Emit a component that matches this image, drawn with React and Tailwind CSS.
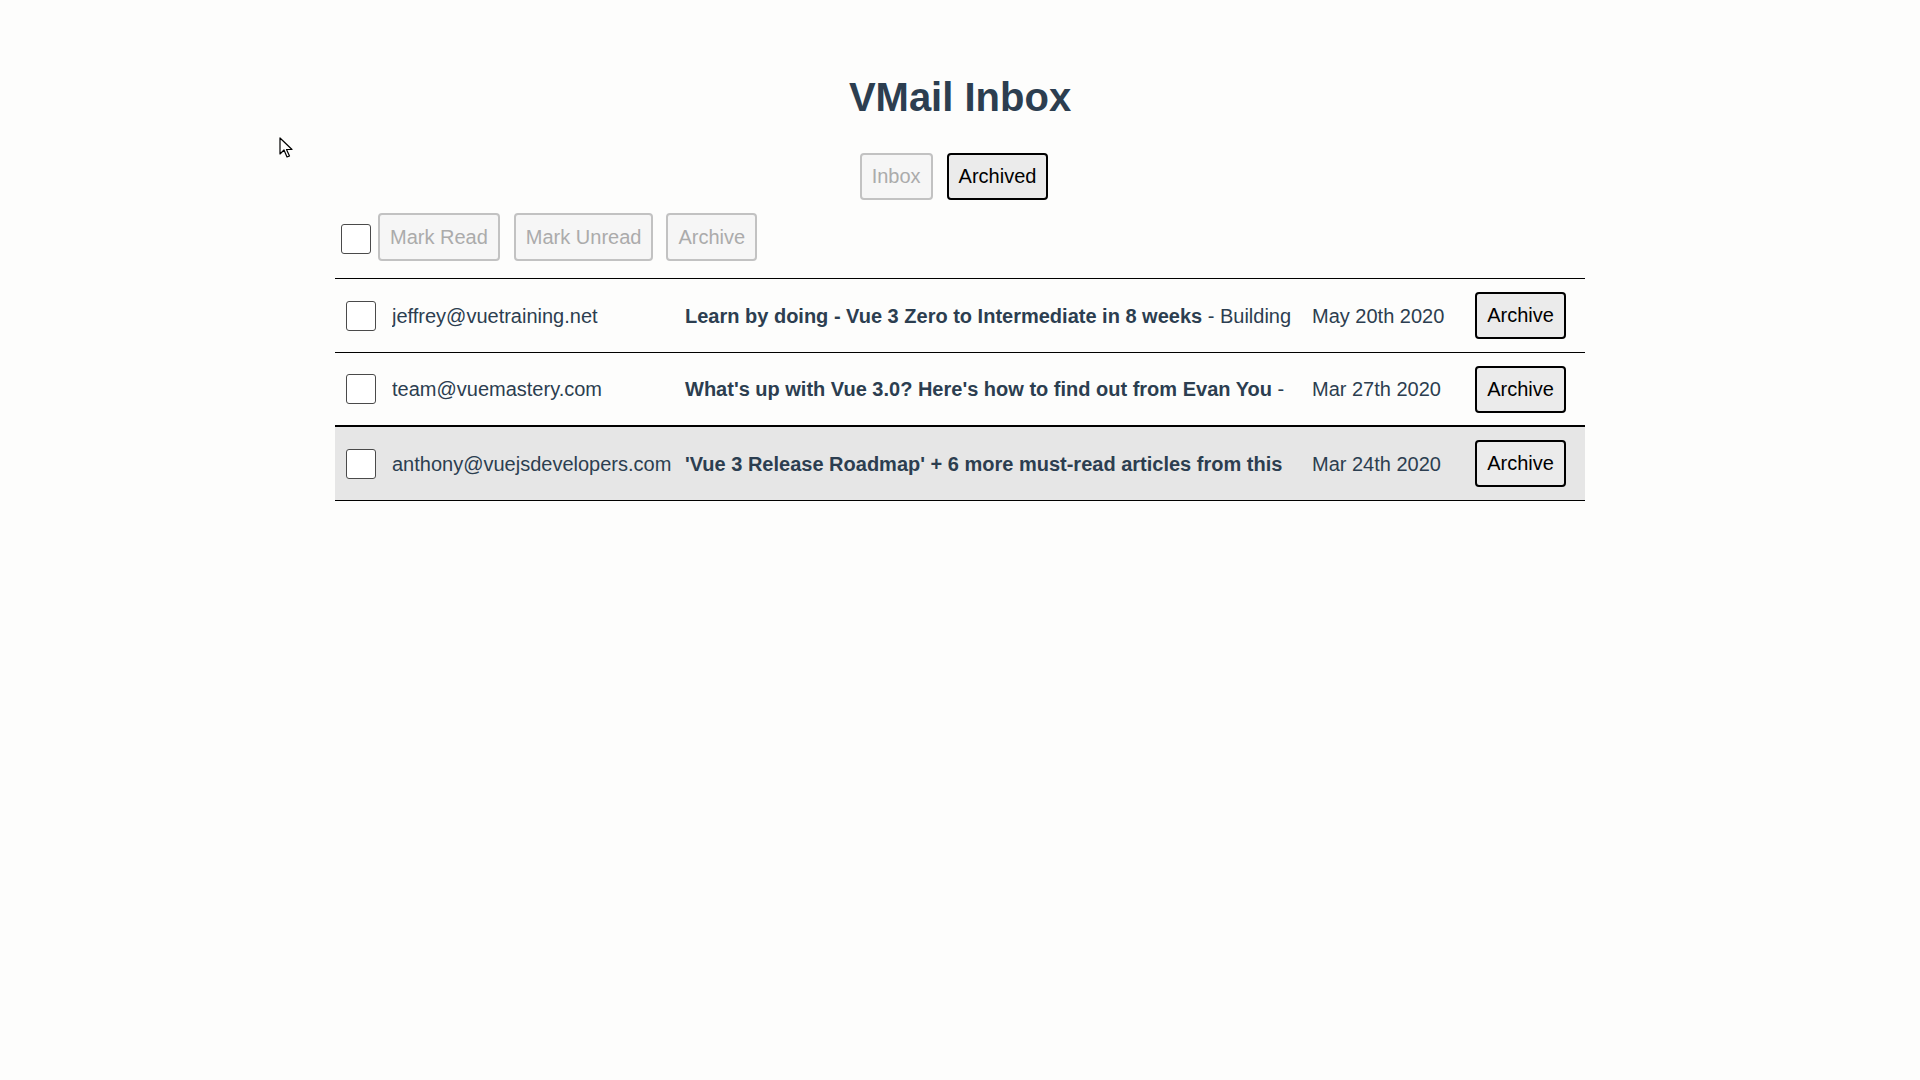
import React from "react";

const emails = [
  {
    from: "jeffrey@vuetraining.net",
    subject: "Learn by doing - Vue 3 Zero to Intermediate in 8 weeks",
    body: " - Building",
    date: "May 20th 2020",
    rowClass: "border-b border-black",
  },
  {
    from: "team@vuemastery.com",
    subject: "What's up with Vue 3.0? Here's how to find out from Evan You",
    body: " -",
    date: "Mar 27th 2020",
    rowClass: "border-b-2 border-black",
  },
  {
    from: "anthony@vuejsdevelopers.com",
    subject: "'Vue 3 Release Roadmap' + 6 more must-read articles from this",
    body: "",
    date: "Mar 24th 2020",
    rowClass: "border-b border-black bg-[#e6e6e6]",
  },
];

function Box() {
  return (
    <input
      type="checkbox"
      className="appearance-none w-[30px] h-[30px] border border-[#4a4a4a] rounded-[3px] bg-white shrink-0 m-0"
    />
  );
}

function Btn({ children, disabled, className = "" }) {
  return (
    <button
      className={
        (disabled
          ? "border-[#c2c2c2] text-[#ababab] bg-[#f6f6f6] "
          : "border-black text-black bg-[#ebebeb] ") +
        "border-2 rounded-[4px] px-[10px] h-[47px] text-[20px] leading-[23px] " +
        className
      }
    >
      {children}
    </button>
  );
}

export default function App() {
  return (
    <div
      className="relative min-h-[1080px] w-full bg-[#fdfdfc] text-[#2c3e50]"
      style={{ fontFamily: '"Liberation Sans", Arial, sans-serif' }}
    >
      <svg
        className="absolute left-[279px] top-[137px]"
        width="16"
        height="22"
        viewBox="0 0 16 22"
      >
        <path
          d="M1 1 L1 17 L5 13 L8 20 L10.5 19 L7.5 12.5 L13 12.5 Z"
          fill="#fff"
          stroke="#000"
          strokeWidth="1.2"
          strokeLinejoin="round"
        />
      </svg>

      <div className="pt-[74px] flex flex-col items-center">
        <h1 className="text-[40px] leading-[46px] font-bold text-[#2c3e50]">
          VMail Inbox
        </h1>
        <div className="mt-[33px] flex gap-[14px] pr-[12px]">
          <Btn disabled>Inbox</Btn>
          <Btn>Archived</Btn>
        </div>
      </div>

      <div className="w-[1250px] mx-auto">
        <div className="mt-[13px] flex items-center pl-[6px] h-[48px]">
          <div className="pt-[10px]">
            <Box />
          </div>
          <Btn disabled className="ml-[7px] h-[48px]">Mark Read</Btn>
          <Btn disabled className="ml-[14px] h-[48px]">Mark Unread</Btn>
          <Btn disabled className="ml-[13px] h-[48px]">Archive</Btn>
        </div>

        <div className="mt-[17px] border-t border-black">
          {emails.map((e, i) => (
            <div
              key={i}
              className={"flex items-center h-[74px] pl-[11px] pr-[19px] text-[20px] " + e.rowClass}
            >
              <Box />
              <div className="ml-[16px] w-[289px] shrink-0 whitespace-nowrap overflow-hidden">
                {e.from}
              </div>
              <div className="w-[631px] shrink-0 whitespace-nowrap overflow-hidden pl-[4px] pr-[20px]">
                <strong className="font-bold">{e.subject}</strong>
                {e.body}
              </div>
              <div className="w-[163px] shrink-0 whitespace-nowrap">{e.date}</div>
              <Btn className="w-[91px] shrink-0 px-0">Archive</Btn>
            </div>
          ))}
        </div>
      </div>
    </div>
  );
}
